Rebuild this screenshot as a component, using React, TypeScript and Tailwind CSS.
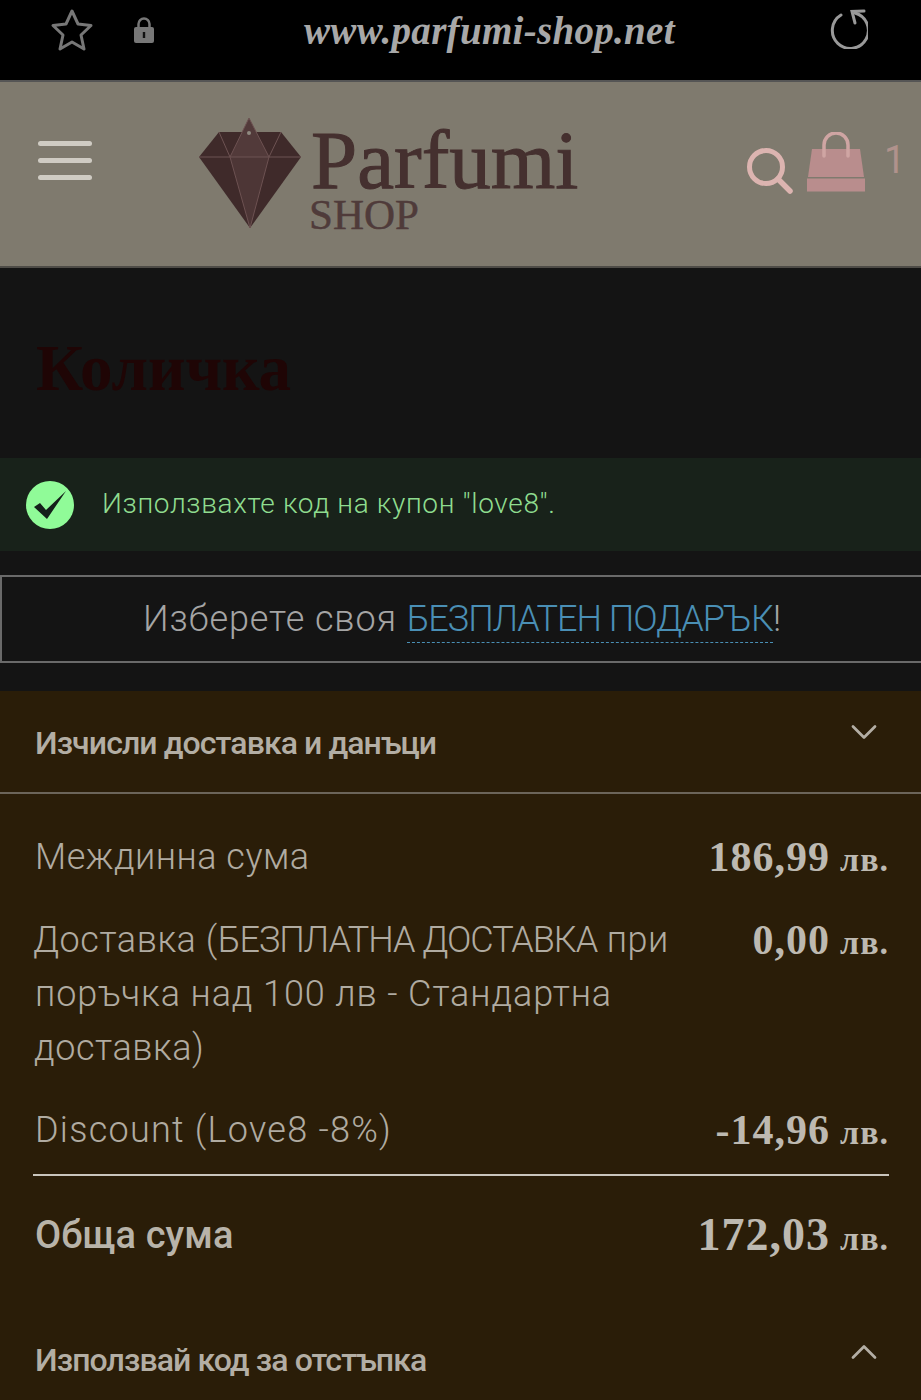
import React from 'react';
import { ChevronDown, ChevronUp } from 'lucide-react';

const sans = 'font-["Roboto","Noto_Sans",sans-serif]';

const Diamond = () => (
    <svg width="102" height="110" viewBox="0 0 102 110" className="shrink-0">
        <polygon points="0,39 20,14 82,14 102,39 51,110" fill="#3f2a2a" />
        <polygon points="50,0 31,39 70,39" fill="#523a3a" />
        <polygon points="31,39 70,39 51,110" fill="#4d3636" />
        <path d="M0 39H102M20 14L31 39L51 110L70 39L82 14M31 39L50 0L70 39" fill="none" stroke="#6d5252" strokeWidth="1" />
        <circle cx="50" cy="15" r="2" fill="#8f8a80" />
    </svg>
);

const BrowserBar = () => (
    <div className="h-[82px] bg-black border-b-2 border-[#555] flex items-start shrink-0">
        <svg width="44" height="44" viewBox="0 0 44 44" className="ml-[50px] mt-[8px]">
            <polygon
                points="22,3 28,16 41,17.5 31,27 34,41 22,34 10,41 13,27 3,17.5 16,16"
                fill="none"
                stroke="#777"
                strokeWidth="3"
                strokeLinejoin="round"
            />
        </svg>
        <svg width="22" height="28" viewBox="0 0 22 28" className="ml-[39px] mt-[16px]">
            <path d="M5.5 12V8a5.5 5.5 0 0 1 11 0v4" fill="none" stroke="#777" strokeWidth="2.5" />
            <rect x="1" y="11" width="20" height="16" rx="2" fill="#777" />
            <rect x="9.8" y="16" width="2.4" height="6" fill="#111" />
        </svg>
        <span className='ml-[149px] mt-[8px] w-[374px] whitespace-nowrap text-[39px] leading-[46px] italic font-bold tracking-[0.3px] text-[#a8a8a8] font-["Liberation_Serif",serif]'>
            www.parfumi-shop.net
        </span>
        <svg width="40" height="40" viewBox="0 0 40 40" className="ml-[150px] mt-[9px]">
            <path d="M13 6A18 18 0 1 0 27 4" fill="none" stroke="#999" strokeWidth="3" strokeLinecap="round" />
            <path d="M27 14L24 2.5L36 2" fill="none" stroke="#999" strokeWidth="3" strokeLinecap="round" />
        </svg>
    </div>
);

const SiteHeader = () => (
    <header className="h-[186px] bg-[#7f7a6e] border-b-2 border-[#4e4c47] flex items-start shrink-0">
        <div className="ml-[38px] mt-[59px] w-[54px] flex flex-col gap-[12px]">
            <div className="h-[5px] rounded-full bg-[#cfcbc3]" />
            <div className="h-[5px] rounded-full bg-[#cfcbc3]" />
            <div className="h-[5px] rounded-full bg-[#cfcbc3]" />
        </div>
        <div className="ml-[107px] mt-[36px]">
            <Diamond />
        </div>
        <div className='ml-[10px] mt-[40px] w-[270px] text-[#45302f] font-["Liberation_Serif",serif]'>
            <div className="text-[83px] leading-[76px] h-[76px] [-webkit-text-stroke:1px_#45302f]">Parfumi</div>
            <div className="-ml-[2px] text-[43px] leading-[34px] h-[34px] text-[#4f3b3a] [-webkit-text-stroke:0.5px_#4f3b3a]">SHOP</div>
        </div>
        <svg width="48" height="48" viewBox="0 0 48 48" className="ml-[165px] mt-[65px]">
            <circle cx="20" cy="20" r="16.5" fill="none" stroke="#dcb4b0" strokeWidth="5" />
            <path d="M32 32L44 44" stroke="#dcb4b0" strokeWidth="5.5" strokeLinecap="round" />
        </svg>
        <svg width="60" height="60" viewBox="0 0 60 60" className="ml-[12px] mt-[50px]">
            <path d="M6 17H54L58 45H2Z" fill="#b98d8d" />
            <rect x="1" y="46.5" width="58" height="13" fill="#b98d8d" />
            <path d="M18 24V13a11 11 0 0 1 24 0V24" fill="none" stroke="#cfa5a3" strokeWidth="3.5" strokeLinecap="round" />
        </svg>
        <span className={`${sans} ml-[18px] mt-[53px] text-[38px] leading-[50px] font-normal text-[#b0928c]`}>1</span>
    </header>
);

const Price = ({ value, unit, big = false }: { value: string; unit: string; big?: boolean }) => (
    <div className='whitespace-nowrap leading-[54px] font-bold text-[#bdb9b1] font-["Liberation_Serif",serif] flex items-baseline tracking-[1px]'>
        <span className={big ? 'text-[46px]' : 'text-[42px]'}>{value}</span>
        <span className="ml-[10px] text-[34px]">{unit}</span>
    </div>
);

const Row = ({ children, value, className = '' }: { children: React.ReactNode; value: string; className?: string }) => (
    <div className={`flex justify-between items-start pl-[34px] pr-[32px] ${className}`}>
        <div className="text-[36px] leading-[54px] font-light text-[#b0aba1] w-[660px] whitespace-nowrap">{children}</div>
        <Price value={value} unit="лв." />
    </div>
);

export default function App() {
    return (
        <div className={`${sans} w-[921px] h-[1400px] overflow-hidden bg-[#141414] flex flex-col`}>
            <BrowserBar />
            <SiteHeader />

            <h1 className='pl-[36px] pt-[60px] h-[190px] shrink-0 text-[65px] leading-[80px] font-bold text-[#1f0505] font-["Liberation_Serif",serif]'>
                Количка
            </h1>

            <div className="h-[93px] bg-[#18221a] flex items-center pl-[26px] shrink-0">
                <div className="w-[48px] h-[48px] rounded-full bg-[#90fb98] flex items-center justify-center">
                    <svg width="48" height="48" viewBox="0 0 48 48">
                        <path d="M8 26L14 22L20 29L40 10L21 38Z" fill="#14201a" />
                    </svg>
                </div>
                <span className="ml-[28px] mb-[2px] text-[28px] font-light text-[#8fdc8f] tracking-[0.65px]">
                    Използвахте код на купон "love8".
                </span>
            </div>

            <div className="mt-[24px] -mr-[2px] h-[88px] border-2 border-[#6a6a6a] flex items-center justify-center shrink-0 text-[36px] font-light text-[#a5a5a5] tracking-[0.9px]">
                <span className="ml-[2px]">
                    Изберете своя{' '}
                    <span className="text-[#4a8fb5] tracking-[-1px] pb-[2px] border-b-[1.5px] border-dashed border-[#4a8fb5]">БЕЗПЛАТЕН ПОДАРЪК</span>!
                </span>
            </div>

            <section className="mt-[28px] flex-1 bg-[#2a1d08]">
                <div className="h-[103px] border-b-2 border-[#6c655a] flex items-start justify-between pl-[35px] pr-[35px]">
                    <span className="mt-[28px] text-[32px] leading-[48px] font-medium tracking-[-0.92px] text-[#b3aea4]">Изчисли доставка и данъци</span>
                    <ChevronDown className="mt-[19px] w-[44px] h-[44px] text-[#b3aea4]" strokeWidth={1.5} />
                </div>

                <div className="pt-[36px] flex flex-col">
                    <Row value="186,99">
                        <span className="ml-[1px] tracking-[0.5px]">Междинна сума</span>
                    </Row>
                    <Row value="0,00" className="mt-[26px]">
                        <span className="-ml-[1px] tracking-[0.55px]">
                            Доставка (<span className="tracking-[-1px]">БЕЗПЛАТНА ДОСТАВКА</span> при
                            <br />
                            <span className="ml-[1px] tracking-[0.9px]">поръчка над 100 лв - Стандартна</span>
                            <br />
                            доставка)
                        </span>
                    </Row>
                    <Row value="-14,96" className="mt-[28px]">
                        <span className="ml-[1px] tracking-[1.25px]">Discount (Love8 -8%)</span>
                    </Row>
                </div>

                <div className="ml-[33px] mr-[32px] mt-[14px] h-[2px] bg-[#c9c5bc]" />

                <div className="flex justify-between items-start pl-[35px] pr-[32px] mt-[32px] h-[54px]">
                    <span className="text-[38px] leading-[54px] font-medium tracking-[0.1px] text-[#b8b3a9]">Обща сума</span>
                    <Price value="172,03" unit="лв." big />
                </div>

                <div className="flex items-start justify-between pl-[35px] pr-[35px] mt-[66px]">
                    <span className="mt-[8px] text-[32px] leading-[48px] font-medium tracking-[-0.9px] text-[#b3aea4]">Използвай код за отстъпка</span>
                    <ChevronUp className="mt-[2px] w-[44px] h-[44px] text-[#b3aea4]" strokeWidth={1.5} />
                </div>
            </section>
        </div>
    );
}
